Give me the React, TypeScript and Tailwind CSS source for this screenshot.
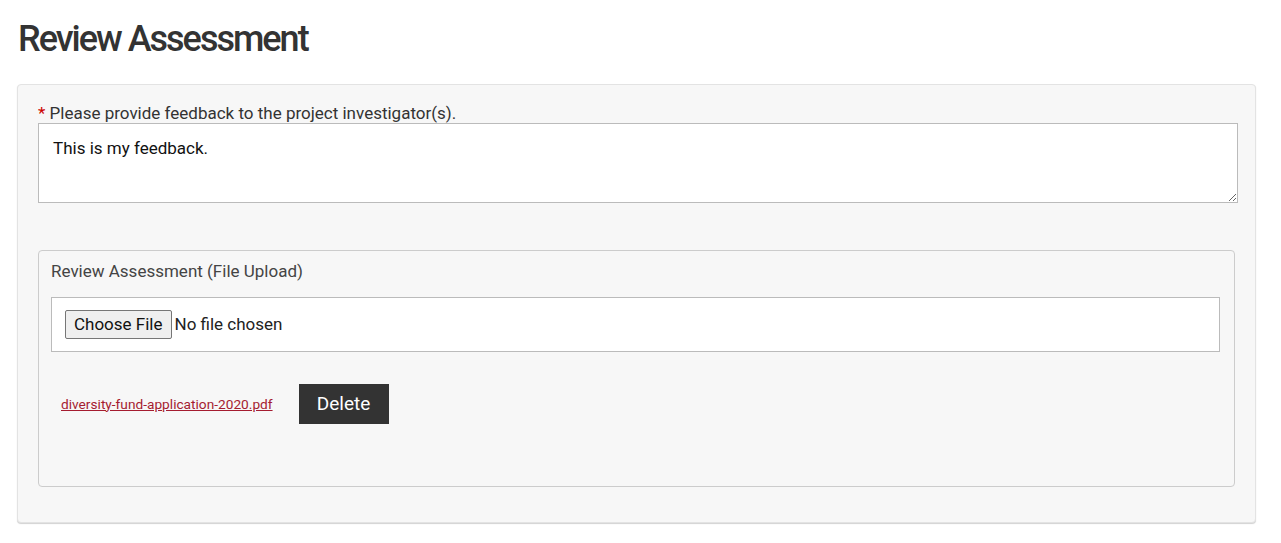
import { useState } from 'react';

const App = () => {
  const [feedback, setFeedback] = useState('This is my feedback.');

  return (
    <div className="min-h-[543px] bg-white px-[17px] pt-[17px] font-['Roboto',sans-serif] text-[#333]">
      <h1 className="ml-px text-[36px] font-medium leading-[44px] tracking-[-2px] text-[#333]">
        Review Assessment
      </h1>

      {/* Main card */}
      <div className="mt-[23px] w-[1239px] rounded-[4px] border border-[#e3e3e3] bg-[#f7f7f7] pb-[35px] pl-[20px] pr-[17px] pt-[18px] shadow-[0_1px_1px_rgba(0,0,0,0.18)]">
        <label className="block text-[17px] leading-[20px] text-[#333]">
          <span className="text-[#c00]">*</span> Please provide feedback to the project investigator(s).
        </label>
        <textarea
          value={feedback}
          onChange={(e) => setFeedback(e.target.value)}
          className="block h-[80px] w-full resize-y rounded-none border border-[#bbb] bg-white px-[14px] py-[12px] text-[17px] leading-[24px] text-[#111] outline-none"
        />

        {/* File upload fieldset */}
        <div className="mt-[47px] mr-[3px] h-[237px] rounded-[4px] border border-[#ccc] pl-[12px] pr-[14px] pt-[10px]">
          <div className="text-[17px] leading-[20px] text-[#444]">Review Assessment (File Upload)</div>
          <div className="mt-[16px] flex h-[55px] items-center border border-[#bbb] bg-white px-[13px]">
            <input
              type="file"
              className="text-[17px] text-[#222] file:mr-[3px] file:rounded-[2px] file:border file:border-[#767676] file:bg-[#efefef] file:px-[8px] file:py-[1px] file:text-[17px] file:text-[#111]"
            />
          </div>
          <div className="mt-[32px] flex items-center pl-[10px]">
            <a href="#" className="text-[13.7px] text-[#a51c30] underline">
              diversity-fund-application-2020.pdf
            </a>
            <button className="ml-[26px] h-[40px] w-[90px] bg-[#333] text-[19px] font-normal text-white">
              Delete
            </button>
          </div>
        </div>
      </div>
    </div>
  );
};

export default App;
